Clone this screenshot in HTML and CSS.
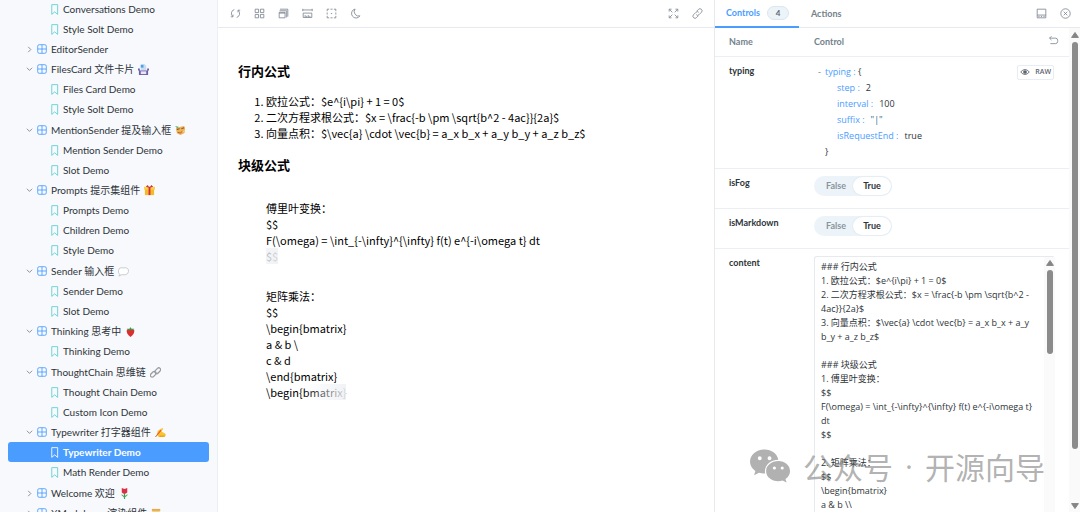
FILE: index.html
```html
<!DOCTYPE html>
<html lang="zh-CN">
<head>
<meta charset="utf-8">
<title>Typewriter Demo</title>
<link rel="stylesheet" href="styles.css">
</head>
<body>
<svg class="defs" aria-hidden="true">
  <symbol id="leaf" viewBox="0 0 14 14"><path d="M3.500 .8h7.500v12.400L7.200 10l-3.700 3.200z" fill="none" stroke="currentColor" stroke-width="1.100" stroke-linejoin="round"/></symbol>
  <symbol id="comp" viewBox="0 0 14 14"><rect x="1" y="1" width="12" height="12" rx="2" fill="none" stroke="currentColor" stroke-width="1.200"/><path d="M7 1v12M1 7h12" stroke="currentColor" stroke-width="1.200"/></symbol>
  <symbol id="down" viewBox="0 0 8 8"><path d="M1 2l3 3 3-3" fill="none" stroke="currentColor" stroke-width="1"/></symbol>
  <symbol id="right" viewBox="0 0 8 8"><path d="M2.500 1l3 3-3 3" fill="none" stroke="currentColor" stroke-width="1"/></symbol>
  <symbol id="up-arrow" viewBox="0 0 8 8"><path d="M4 1.500L7.400 6.400H.6z" fill="#858585" stroke="#858585" stroke-linejoin="round"/></symbol>
  <symbol id="down-arrow" viewBox="0 0 8 8"><path d="M4 6.500L7.400 1.600H.6z" fill="#858585" stroke="#858585" stroke-linejoin="round"/></symbol>
</svg>
<div class="app">
  <nav class="sidebar" aria-label="Stories">
    <section>
      <a class="leaf" href="#"><svg><use href="#leaf"/></svg>Conversations Demo</a>
      <a class="leaf" href="#"><svg><use href="#leaf"/></svg>Style Solt Demo</a>
    </section>
    <section>
      <button class="group"><svg class="caret"><use href="#right"/></svg><svg><use href="#comp"/></svg>EditorSender</button>
    </section>
    <section class="spaced">
      <button class="group"><svg class="caret"><use href="#down"/></svg><svg><use href="#comp"/></svg>FilesCard 文件卡片
        <svg class="emoji" viewBox="0 0 12 12"><path d="M3 0h4l2 2v5H3z" fill="#c9dcf2"/><path d="M3 1h3v3H3z" fill="#4aa3ea"/><path d="M0 5h2v2h8V5h2v2h-1v5H1V7H0z" fill="#6f5ea8"/><path d="M3 8h6v3H3z" fill="#e9e6f6"/></svg></button>
      <a class="leaf" href="#"><svg><use href="#leaf"/></svg>Files Card Demo</a>
      <a class="leaf" href="#"><svg><use href="#leaf"/></svg>Style Solt Demo</a>
    </section>
    <section>
      <button class="group"><svg class="caret"><use href="#down"/></svg><svg><use href="#comp"/></svg>MentionSender 提及输入框
        <svg class="emoji" viewBox="0 0 12 12"><path d="M1 3l2 0 3-1 4-1 1 3-1 5-4 2-4-2z" fill="#eeb157"/><path d="M0 1l4 1-1 2z" fill="#60b36b"/><path d="M2 5l3-1M7 4l3-1" stroke="#69452d"/><path d="M3 8q3 2 5-1" fill="none" stroke="#a7562f"/><path d="M8 7l3-2v4z" fill="#f5cd7a"/></svg></button>
      <a class="leaf" href="#"><svg><use href="#leaf"/></svg>Mention Sender Demo</a>
      <a class="leaf" href="#"><svg><use href="#leaf"/></svg>Slot Demo</a>
    </section>
    <section class="spaced">
      <button class="group"><svg class="caret"><use href="#down"/></svg><svg><use href="#comp"/></svg>Prompts 提示集组件
        <svg class="emoji" viewBox="0 0 12 12"><path d="M1 4h10v7H1z" fill="#f6b928"/><path d="M0 2h12v3H0z" fill="#fdcf45"/><path d="M5 2h2v9H5z" fill="#c92e46"/><path d="M6 3L2 2l2-2zM6 3l4-1-2-2z" fill="#c92e46"/></svg></button>
      <a class="leaf" href="#"><svg><use href="#leaf"/></svg>Prompts Demo</a>
      <a class="leaf" href="#"><svg><use href="#leaf"/></svg>Children Demo</a>
      <a class="leaf" href="#"><svg><use href="#leaf"/></svg>Style Demo</a>
    </section>
    <section>
      <button class="group"><svg class="caret"><use href="#down"/></svg><svg><use href="#comp"/></svg>Sender 输入框
        <svg class="emoji" viewBox="0 0 12 12"><path d="M3 2h6q3 1 2.500 4T8 9.500H4L1 11l1-2Q0 8 .5 5T3 2z" fill="#fff" stroke="#b9bcc0" stroke-width=".8"/></svg></button>
      <a class="leaf" href="#"><svg><use href="#leaf"/></svg>Sender Demo</a>
      <a class="leaf" href="#"><svg><use href="#leaf"/></svg>Slot Demo</a>
    </section>
    <section class="spaced">
      <button class="group"><svg class="caret"><use href="#down"/></svg><svg><use href="#comp"/></svg>Thinking 思考中
        <svg class="emoji" viewBox="0 0 12 12"><path d="M2 4q4-2 8 0 1 4-4 8-5-4-4-8z" fill="#d92f32"/><path d="M2 3l3 0 1-2 1 2 3 0-2 2-2-1-2 1z" fill="#3d9a4a"/></svg></button>
      <a class="leaf" href="#"><svg><use href="#leaf"/></svg>Thinking Demo</a>
    </section>
    <section>
      <button class="group"><svg class="caret"><use href="#down"/></svg><svg><use href="#comp"/></svg>ThoughtChain 思维链
        <svg class="emoji" viewBox="0 0 12 12"><g fill="none" stroke="#9a9da0" stroke-width="1.400"><rect x="5" y="2" width="7" height="4" rx="2" transform="rotate(-45 8.500 4)"/><rect x="0" y="6" width="7" height="4" rx="2" transform="rotate(-45 3.500 8)"/></g></svg></button>
      <a class="leaf" href="#"><svg><use href="#leaf"/></svg>Thought Chain Demo</a>
      <a class="leaf" href="#"><svg><use href="#leaf"/></svg>Custom Icon Demo</a>
    </section>
    <section class="spaced">
      <button class="group"><svg class="caret"><use href="#down"/></svg><svg><use href="#comp"/></svg>Typewriter 打字器组件
        <svg class="emoji" viewBox="0 0 12 12"><path d="M2 8l1-4 5-3 1 1-2 3 4 2 1 2-3 2H4z" fill="#fcc331"/><path d="M0 11l6-8 1 1-6 7z" fill="#df5b35"/><path d="M5 10h6" stroke="#d99117"/></svg></button>
      <a class="leaf selected" href="#" aria-current="page"><svg><use href="#leaf"/></svg>Typewriter Demo</a>
      <a class="leaf" href="#"><svg><use href="#leaf"/></svg>Math Render Demo</a>
    </section>
    <section>
      <button class="group"><svg class="caret"><use href="#right"/></svg><svg><use href="#comp"/></svg>Welcome 欢迎
        <svg class="emoji" viewBox="0 0 12 12"><path d="M3 0l3 1 3-1v5q-3 3-6 0z" fill="#dc2f45"/><path d="M6 6v6" stroke="#3f9950" stroke-width="1.200"/><path d="M6 11L2 7q4 0 4 4zM6 11l4-4q-4 0-4 4z" fill="#54ad62"/></svg></button>
    </section>
    <section>
      <button class="group"><svg class="caret"><use href="#right"/></svg><svg><use href="#comp"/></svg>XMarkdown 渲染组件
        <svg class="emoji" viewBox="0 0 12 12"><path d="M1 1h9v3H9v7H2V4H1z" fill="#f5cf85"/><path d="M1 1h9v2H1z" fill="#e5a94e"/></svg></button>
    </section>
  </nav>

  <main class="preview">
    <div class="toolbar">
      <button aria-label="Reload"><svg viewBox="0 0 14 14"><path d="M5.500 2A5.200 5.200 0 0 0 3.300 10.700M8.500 12a5.200 5.200 0 0 0 2.200-8.700M1 11.200h2.800V8.400M13 2.800h-2.800v2.800"/></svg></button>
      <button aria-label="Grid"><svg viewBox="0 0 14 14"><path d="M1.500 1.500h4.300v4.300H1.500zM8.200 1.500h4.300v4.300H8.200zM1.500 8.200h4.300v4.300H1.500zM8.200 8.200h4.300v4.300H8.200z"/></svg></button>
      <button aria-label="Viewport"><svg viewBox="0 0 14 14"><path d="M1.500 5.500h7.500v7H1.500zM2 3.500h9v8.500M2.500 1.500h10v9.500M1.500 6.500h7.500"/></svg></button>
      <button aria-label="Measure"><svg viewBox="0 0 14 14"><path d="M1 2.500h12M1 1v3M13 1v3M1.500 6.500h11v5.500h-11zM4 9v3M6 10v2M8 9v3M10 10v2"/></svg></button>
      <button aria-label="Outline"><svg viewBox="0 0 14 14"><path d="M1.500 4V1.500H4M10 1.500h2.500V4M12.500 10v2.500H10M4 12.500H1.500V10M5.700 1.500h2.600M5.700 12.500h2.600M1.500 5.700v2.600M12.500 5.700v2.600M6.200 7h1.600"/></svg></button>
      <button aria-label="Theme"><svg viewBox="0 0 14 14"><path d="M6.500 1.300A5.800 5.800 0 1 0 12.700 10 5.600 5.600 0 0 1 6.500 1.300z"/></svg></button>
      <span class="grow"></span>
      <button aria-label="Full screen"><svg viewBox="0 0 14 14"><path d="M1.500 4.500v-3h3M9.500 1.500h3v3M12.500 9.500v3h-3M4.500 12.500h-3v-3M2 2l3.500 3.500M12 2L8.500 5.500M12 12L8.500 8.500M2 12l3.500-3.500"/></svg></button>
      <button aria-label="Copy link"><svg viewBox="0 0 14 14"><path d="M6 4l2.200-2.200a2.500 2.500 0 0 1 3.900 3.600L9 8.500a2.500 2.500 0 0 1-3.600 0M8 10l-2.200 2.200a2.500 2.500 0 0 1-3.900-3.600L5 5.500a2.500 2.500 0 0 1 3.600 0"/></svg></button>
    </div>
    <article class="doc">
      <h3>行内公式</h3>
      <ol>
        <li>欧拉公式：$e^{i\pi} + 1 = 0$</li>
        <li>二次方程求根公式：$x = \frac{-b \pm \sqrt{b^2 - 4ac}}{2a}$</li>
        <li>向量点积：$\vec{a} \cdot \vec{b} = a_x b_x + a_y b_y + a_z b_z$</li>
      </ol>
      <h3>块级公式</h3>
      <p>傅里叶变换：<br>$$<br>F(\omega) = \int_{-\infty}^{\infty} f(t) e^{-i\omega t} dt<br><span class="fog dense">$$</span></p>
      <p>矩阵乘法：<br>$$<br>\begin{bmatrix}<br>a &amp; b \<br>c &amp; d<br>\end{bmatrix}<br>\begin{<span class="fog">bmatrix}</span></p>
    </article>
  </main>

  <aside class="panel">
    <div class="tabs">
      <button class="tab active">Controls<span class="badge">4</span></button>
      <button class="tab">Actions</button>
      <span class="grow"></span>
      <button class="tool" aria-label="Panel position"><svg viewBox="0 0 14 14"><path d="M1.500 1.500h11v11h-11zM1.500 9h11M3 10.800h1.500M6.200 10.800h1.500M9.500 10.800H11"/></svg></button>
      <button class="tool" aria-label="Close panel"><svg viewBox="0 0 14 14"><circle cx="7" cy="7" r="6"/><path d="M4.700 4.700l4.600 4.600M9.300 4.700L4.700 9.300"/></svg></button>
    </div>
    <div class="body">
      <table>
        <thead>
          <tr><th scope="col">Name</th><th scope="col"><div class="head">Control<button class="tool" aria-label="Reset"><svg viewBox="0 0 14 14"><path d="M4.500 1.500L2 4l2.500 2.500M2 4h7.500a2.800 2.800 0 0 1 2.800 2.800v1.400A2.800 2.800 0 0 1 9.500 11H3"/></svg></button></div></th></tr>
        </thead>
        <tbody>
          <tr>
            <th scope="row">typing</th>
            <td class="json"><div class="split">
              <div class="tree">
                <div><i>-</i><b>typing :</b> {</div>
                <div class="prop"><b>step :</b><span>2</span></div>
                <div class="prop"><b>interval :</b><span>100</span></div>
                <div class="prop"><b>suffix :</b><span class="str">"|"</span></div>
                <div class="prop"><b>isRequestEnd :</b><span>true</span></div>
                <div class="close">}</div>
              </div>
              <button class="raw"><svg viewBox="0 0 14 14"><path d="M1 7q6-7 12 0-6 7-12 0z" fill="none" stroke="#5c6570" stroke-width="1.200"/><circle cx="7" cy="7" r="2.600" fill="#5c6570"/></svg>RAW</button>
            </div></td>
          </tr>
          <tr>
            <th scope="row">isFog</th>
            <td><label class="switch"><input type="checkbox" checked aria-label="isFog"><span>False</span><span class="on">True</span></label></td>
          </tr>
          <tr>
            <th scope="row">isMarkdown</th>
            <td><label class="switch"><input type="checkbox" checked aria-label="isMarkdown"><span>False</span><span class="on">True</span></label></td>
          </tr>
          <tr>
            <th scope="row"><label for="content">content</label></th>
            <td><div class="editor"><textarea id="content" rows="20">### 行内公式
1. 欧拉公式：$e^{i\pi} + 1 = 0$
2. 二次方程求根公式：$x = \frac{-b \pm \sqrt{b^2 - 4ac}}{2a}$
3. 向量点积：$\vec{a} \cdot \vec{b} = a_x b_x + a_y b_y + a_z b_z$

### 块级公式
1. 傅里叶变换：
$$
F(\omega) = \int_{-\infty}^{\infty} f(t) e^{-i\omega t} dt
$$

2. 矩阵乘法：
$$
\begin{bmatrix}
a &amp; b \\
c &amp; d
\end{bmatrix}</textarea><div class="bar"><svg><use href="#up-arrow"/></svg><div class="thumb"></div></div></div></td>
          </tr>
        </tbody>
      </table>
      <div class="bar outer"><svg><use href="#up-arrow"/></svg><div class="thumb"></div><svg><use href="#down-arrow"/></svg></div>
    </div>
  </aside>
</div>
<div class="watermark">
  <svg viewBox="0 0 42 34"><path fill-rule="evenodd" d="M15 0C6.500 0 0 5.500 0 12.500c0 4 2 7.300 5.500 9.700L4.200 26.500l5-2.600c2 .6 4 .9 6.300.9-1.500-7.500 4.500-14.300 13.500-14.300C27.800 4.300 22 0 15 0zM10 7a2 2 0 1 1 0 4 2 2 0 0 1 0-4zM20 7a2 2 0 1 1 0 4 2 2 0 0 1 0-4z"/><path fill-rule="evenodd" d="M29 12c-7 0-12.500 4.500-12.500 10.300S22 32.500 29 32.500c1.500 0 3-.2 4.300-.6l4.200 2.100-1.200-3.700c3-2 4.700-4.800 4.700-8C41 16.500 36 12 29 12zM25 17.500a1.600 1.600 0 1 1 0 3.200 1.600 1.600 0 0 1 0-3.200zM33 17.500a1.600 1.600 0 1 1 0 3.200 1.600 1.600 0 0 1 0-3.200z"/></svg>
  <span>公众号</span><span class="dot">·</span><span>开源向导</span>
</div>
</body>
</html>
```
FILE: styles.css
```css
* { box-sizing: border-box; }
body {
  margin: 0;
  overflow: hidden;
  background: #fff;
  color: #2e3438;
  font: 10px/20px Lato, "Noto Sans CJK SC", sans-serif;
}
button { border: 0; padding: 0; background: none; font: inherit; color: inherit; }
svg { flex: none; }
.defs { display: none; }
.grow { flex: 1; }
.app {
  display: grid;
  grid-template-columns: 218px minmax(0, 1fr) 366px;
  height: 100vh;
}

/* Story tree */
.sidebar {
  padding: 0 8px;
  margin-top: -1px;
  background: #f7f9fd;
  border-right: 1px solid #eceff3;
  overflow: hidden;
}
.spaced { margin-bottom: 1px; }
.leaf, .group {
  display: flex;
  align-items: center;
  width: 100%;
  height: 20px;
  color: #2e3438;
  text-decoration: none;
  white-space: nowrap;
}
.leaf { gap: 3px; padding-left: 41px; border-radius: 3px; }
.leaf svg { width: 11px; height: 11px; color: #5fd0cf; }
.group { gap: 4px; padding-left: 18px; }
.group svg { width: 10px; height: 10px; color: #4a9dff; }
.group .caret { width: 7px; height: 7px; color: #7d858c; }
.group .emoji { width: 11px; height: 11px; }
.leaf.selected { background: #4a9dff; color: #fff; font-weight: 700; }
.leaf.selected svg { color: #fff; }

/* Preview */
.toolbar {
  display: flex;
  align-items: center;
  gap: 12px;
  height: 28px;
  padding: 0 11px;
  border-bottom: 1px solid #e6eaee;
}
.toolbar button, .tool { display: flex; width: 12px; height: 12px; align-items: center; justify-content: center; }
.toolbar svg, .tool svg { width: 11px; height: 11px; fill: none; stroke: #75808b; stroke-width: 1; }
.doc {
  padding: 33px 20px;
  color: #000;
  font: 11px/16px "Noto Sans CJK SC", sans-serif;
}
.doc h3 { margin: 0; font-size: 13px; line-height: 20px; font-weight: 700; }
.doc ol { margin: 12px 0 14px; padding-left: 28px; }
.doc p { margin: 25px 0 0 28px; }
.doc p + p { margin-top: 24px; }
.fog { position: relative; display: inline-block; }
.fog::after {
  content: "";
  position: absolute;
  inset: 0;
  background: linear-gradient(90deg, rgba(239, 241, 245, 0), rgba(239, 241, 245, .9));
}
.fog.dense::after { background: linear-gradient(90deg, rgba(239, 241, 245, .75), rgba(239, 241, 245, .9)); }

/* Addon panel */
.panel {
  display: flex;
  flex-direction: column;
  min-height: 0;
  border-left: 1px solid #e6eaee;
}
.tabs {
  display: flex;
  flex: none;
  height: 28px;
  gap: 12px;
  padding-right: 9px;
  border-bottom: 1px solid #e6eaee;
  align-items: center;
}
.tab { display: flex; align-items: center; height: 28px; color: #73828c; font-weight: 700; font-size: 9px; }
.tab.active { padding: 0 10px 0 11px; color: #4a9dff; border-bottom: 2px solid #4a9dff; }
.badge {
  width: 22px;
  margin-left: 7px;
  border: 1px solid #dbe6ee;
  border-radius: 8px;
  background: #ecf4f9;
  color: #5c6570;
  font-size: 8px;
  line-height: 12px;
}
.body { display: flex; flex: 1; min-height: 0; overflow: hidden; }
table { flex: 1; border-collapse: collapse; font-size: 9px; line-height: 16px; table-layout: fixed; align-self: flex-start; }
th, td { padding: 0; text-align: left; vertical-align: top; }
tr { border-bottom: 1px solid #ebeef2; }
tbody tr { height: 40px; }
th:first-child { width: 99px; padding-left: 14px; }
thead th { height: 28px; padding-top: 6px; color: #73828c; }
tbody th { padding-top: 6px; }
tbody td { padding: 7px 14px 8px 0; }
.head { display: flex; justify-content: space-between; padding-right: 10px; }
.json { height: 112px; font-family: "Open Sans", sans-serif; }
.split { display: flex; justify-content: space-between; align-items: flex-start; }
.tree { padding-left: 4px; }
.tree i { display: inline-block; width: 7px; font-style: normal; color: #73828c; }
.tree b { font-weight: 400; color: #4a9dff; }
.prop { padding-left: 19px; }
.prop span { margin-left: 6px; }
.prop .str { color: #1c6c8c; }
.close { padding-left: 7px; }
.raw {
  display: flex;
  align-items: center;
  gap: 5px;
  margin: 1px 1px 0 0;
  padding: 0 2px;
  height: 15px;
  border: 1px solid #e6edf3;
  border-radius: 2px;
  color: #5c6570;
  font-size: 7px;
  font-weight: 600;
}
.raw svg { width: 10px; height: 10px; }
.switch {
  display: inline-grid;
  grid-template-columns: 38px 38px;
  height: 20px;
  padding: 1px;
  border-radius: 10px;
  background: #ecf4f9;
  color: #8a949c;
  font-weight: 700;
  line-height: 18px;
  text-align: center;
  vertical-align: top;
}
.switch input { position: absolute; opacity: 0; margin: 0; }
.switch span:first-of-type { padding-left: 4px; }
.switch .on { border-radius: 9px; background: #fff; color: #2e3438; box-shadow: 0 0 2px #cfdce6; }
.editor { display: flex; border: 1px solid #e6eaee; border-right: 0; border-radius: 3px; }
textarea {
  flex: 1;
  min-width: 0;
  padding: 3px 6px;
  border: 0;
  outline: 0;
  resize: none;
  overflow: hidden;
  background: none;
  color: #2e3438;
  font: 9px/14px "Open Sans", "Noto Sans CJK SC", sans-serif;
}
.bar {
  display: flex;
  flex-direction: column;
  align-items: center;
  gap: 3px;
  width: 11px;
  padding: 2px 0;
  background: #fafafa;
}
.bar svg { width: 8px; height: 8px; }
.thumb { width: 6px; height: 84px; border-radius: 3px; background: #8b8b8b; }
.outer { padding-top: 3px; }
.outer .thumb { flex: 1; margin-bottom: 50px; }

.watermark {
  position: absolute;
  right: 35px;
  bottom: 24px;
  display: flex;
  align-items: center;
  gap: 12px;
  color: rgba(120, 120, 120, .58);
  font: 30px/44px "Noto Sans CJK SC", sans-serif;
  pointer-events: none;
}
.watermark svg { width: 41px; height: 34px; fill: currentColor; }
.watermark .dot { font-family: "Open Sans", sans-serif; }
```
